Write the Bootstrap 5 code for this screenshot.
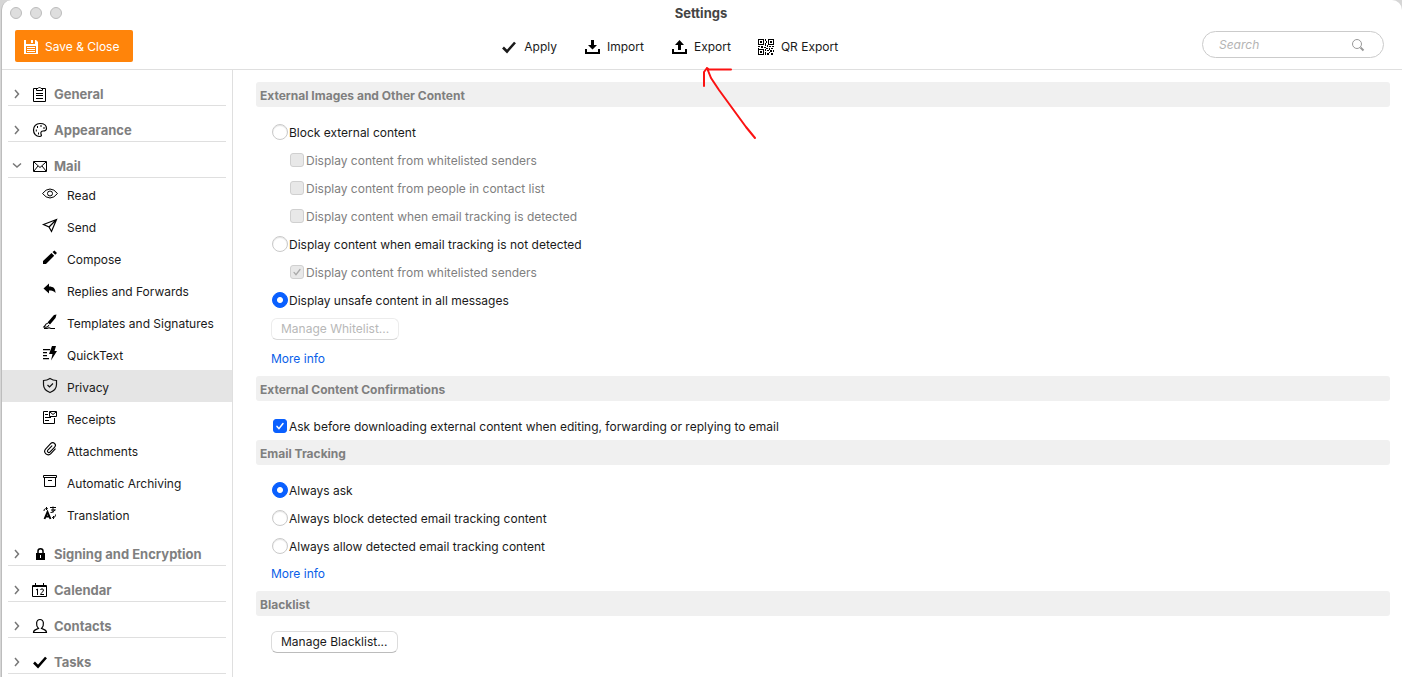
<!DOCTYPE html>
<html lang="en">
<head>
<meta charset="utf-8">
<meta name="viewport" content="width=device-width, initial-scale=1">
<title>Settings</title>
<link href="https://cdn.jsdelivr.net/npm/bootstrap@5.3.0/dist/css/bootstrap.min.css" rel="stylesheet">
<style>
  body { font: 12px/20px Inter, "Liberation Sans", sans-serif; color: #1a1a1a; background: #d6d6d6; overflow-x: hidden; }
  svg { flex: none; display: block; }
  button, input { font: inherit; }
  .window { margin-left: 1px; border-left: 1px solid #bdbdbd; border-radius: 10px 10px 0 0; background: #fff; }
  .titlebar { height: 26px; padding: 3px 15px 0 13px; }
  .titlebar h1 { font-size: 13px; line-height: 20px; color: #444; }
  .dots { left: 8px; top: 7px; gap: 8px; }
  .dot { width: 12px; height: 12px; border-radius: 50%; background: #dedede; border: 1px solid #bcbcbc; }
  .toolbar { padding: 4px 18px 7px 13px; border-bottom: 1px solid #dfdfdf; }
  .save { height: 32px; padding: 2px 14px 0 8px; gap: 6px; border-radius: 2px; background: #ff840a; color: #fff; border: 0; }
  .actions { gap: 27px; padding-left: 4px; }
  .tool { padding: 2px 0 0; border: 0; background: none; gap: 7px; color: #1a1a1a; }
  .tool svg { width: 16px; height: 16px; }
  .arrow { left: 26px; top: 28px; pointer-events: none; }
  .tool .arrow { width: 64px; height: 82px; }
  .search { width: 182px; height: 27px; margin-bottom: 3px; padding: 0 18px 0 16px; border: 1px solid #cbcbcb; border-radius: 14px; }
  .search input { width: 100%; min-width: 0; padding: 0; border: 0; outline: 0; background: none; font-style: italic; }
  .search input::placeholder { color: #b4b4b4; }
  .sidebar { width: 231px; border-right: 1px solid #dfdfdf; }
  .group { margin: 0 6px; width: 218px; height: 36px; padding: 12px 0 0 4px; border: 0; border-bottom: 1px solid #dfdfdf; background: none; color: #7f7f7f; font-size: 13px; font-weight: 700; line-height: 22px; text-align: left; }
  .group .chev { margin-right: 10px; color: #777; }
  .group .ico { margin-right: 6px; color: #000; }
  .sub { height: 32px; padding: 3px 0 0 39px; gap: 8px; color: #1a1a1a; text-decoration: none; }
  .sub svg { margin-bottom: 3px; }
  .sub.active { background: #e5e5e5; }
  .pane { padding: 12px 12px 20px 23px; }
  .bar { height: 25px; margin: 0 0 11px; padding: 0 4px; border-radius: 3px; background: #f0f0f0; color: #7f7f7f; font-size: 12px; font-weight: 700; line-height: 27px; }
  .rows { display: flow-root; padding-left: 16px; }
  .opt { height: 28px; gap: 1px; }
  .opt.inner { padding-left: 18px; gap: 2px; }
  .opt .form-check-input { width: 16px; height: 16px; margin: 0; border: 1px solid #c9c9c9; flex: none; opacity: 1; box-shadow: inset 0 1px 1px #e4e4e4; }
  .opt .form-check-input[type=checkbox] { width: 14px; height: 14px; margin: 0 1px; border-radius: 3px; }
  .opt.inner .form-check-input[type=checkbox] { margin: 0; }
  .opt .form-check-input:checked { background-color: #0a60ff; border-color: #0a60ff; box-shadow: none; }
  .opt .form-check-input[type=radio]:checked { background-image: radial-gradient(circle, #fff 2.5px, transparent 3.5px); }
  .opt .form-check-input[type=checkbox]:checked { background-image: url("data:image/svg+xml,%3csvg xmlns='http://www.w3.org/2000/svg' viewBox='0 0 14 14'%3e%3cpath d='M3.5 7.5l2.3 2.6 4.7-6' fill='none' stroke='white' stroke-width='1.8' stroke-linecap='round'/%3e%3c/svg%3e"); }
  .opt .form-check-input:disabled { background-color: #e8e8e8; border-color: #d0d0d0; opacity: 1; box-shadow: none; }
  .opt .form-check-input[type=checkbox]:disabled:checked { background-image: url("data:image/svg+xml,%3csvg xmlns='http://www.w3.org/2000/svg' viewBox='0 0 14 14'%3e%3cpath d='M3.5 7.5l2.3 2.6 4.7-6' fill='none' stroke='%23a9a9a9' stroke-width='1.5' stroke-linecap='round'/%3e%3c/svg%3e"); }
  .opt .form-check-input:disabled ~ label { color: #808080; opacity: 1; }
  .opt label { padding-top: 1px; }
  .push { display: block; height: 22px; margin: 4px 0 5px -1px; padding: 0 9px; line-height: 20px; border: 1px solid #dcdcdc; border-bottom-color: #bcbcbc; border-radius: 6px; background: #fff; color: #1a1a1a; }
  .push:disabled { color: #b8b8b8; border-color: #ececec; border-bottom-color: #d8d8d8; }
  .more { display: block; width: max-content; margin: 0 0 3px -1px; line-height: 28px; color: #0a60e8; text-decoration: none; }
</style>
</head>
<body>
<svg width="0" height="0" class="position-absolute" aria-hidden="true">
  <symbol id="chev" viewBox="0 0 10 10"><path d="M3 1l3.500 4-3.500 4" fill="none" stroke="currentColor" stroke-width="1.500"/></symbol>
  <symbol id="tick" viewBox="0 0 16 16"><path d="M2 8.500l4 4L14 3.500" fill="none" stroke="currentColor" stroke-width="2.600"/></symbol>
</svg>
<div class="window min-vh-100 d-flex flex-column">
  <header>
    <div class="titlebar position-relative text-center">
      <div class="dots position-absolute d-flex"><span class="dot"></span><span class="dot"></span><span class="dot"></span></div>
      <h1 class="m-0 fw-bold">Settings</h1>
    </div>
    <div class="toolbar d-flex align-items-center justify-content-between">
      <button type="button" class="save d-flex align-items-center">
        <svg width="16" height="16" viewBox="0 0 16 16" fill="none" stroke="#fff"><path d="M1 1h2v4h9V1h1l2 2v12H1z" fill="#fff" stroke="none"/><path d="M4 1v3h7V1z" fill="#ff840a" stroke="none"/><path d="M8 1h2v3H8z" fill="#fff" stroke="none"/><path d="M3 7h10v7H3z" fill="#ff840a" stroke="none"/><path d="M4 8.500h8M4 10.500h8M4 12.500h8"/></svg>
        Save &amp; Close
      </button>
      <div class="actions d-flex align-items-center">
        <button type="button" class="tool d-flex align-items-center"><svg><use href="#tick"/></svg>Apply</button>
        <button type="button" class="tool d-flex align-items-center"><svg viewBox="0 0 16 16"><path d="M7 1h3v5h3l-4.500 4.500L4 6h3z"/><path d="M2 10v4h13v-4" fill="none" stroke="#000" stroke-width="2"/></svg>Import</button>
        <button type="button" class="tool d-flex align-items-center position-relative"><svg viewBox="0 0 16 16"><path d="M7 11h3V6h3L8.500 1 4 6h3z"/><path d="M2 10v4h13v-4" fill="none" stroke="#000" stroke-width="2"/></svg>Export
          <svg class="arrow position-absolute" viewBox="0 0 64 82" fill="none" stroke="#fb1212" stroke-width="2" stroke-linecap="round" stroke-linejoin="round"><path d="M58 75L49 64 22 27 14 15 10 5M7 23V9L10 5 12 6.500H34"/></svg>
        </button>
        <button type="button" class="tool d-flex align-items-center"><svg viewBox="0 0 16 16" fill="none" stroke="#000" shape-rendering="crispEdges"><path d="M.5.5h5v5h-5zM10.500.5h5v5h-5zM.5 10.500h5v5h-5z"/><path d="M2 2h2v2H2zM12 2h2v2h-2zM2 12h2v2H2zM7 0h1v2H7zM8 2h1v2H8zM7 4h1v3H7zM0 7h2v1H0zM3 7h2v2H3zM6 8h2v1H6zM9 6h1v2H9zM11 7h2v1h-2zM14 7h2v1h-2zM0 9h1v1H0zM8 9h2v1H8zM7 10h1v2H7zM11 9h1v2h-1zM13 9h2v1h-2zM9 11h2v1H9zM12 11h2v2h-2zM15 11h1v2h-1zM7 13h1v3H7zM9 14h2v2H9zM11 13h1v1h-1zM13 14h2v2h-2z" fill="#000" stroke="none"/></svg>QR Export</button>
      </div>
      <label class="search d-flex align-items-center">
        <input type="text" placeholder="Search" aria-label="Search">
        <svg width="14" height="14" viewBox="0 0 14 14" fill="none" stroke="#999"><circle cx="6" cy="6" r="4.500"/><path d="M9.500 9.500l3 3" stroke-width="2"/></svg>
      </label>
    </div>
  </header>
  <div class="d-flex flex-grow-1">
    <nav class="sidebar flex-shrink-0">
      <button type="button" class="group d-flex align-items-center"><svg class="chev" width="10" height="10"><use href="#chev"/></svg><svg class="ico" width="16" height="16" viewBox="0 0 16 16" fill="none" stroke="#000"><path d="M5 2.500H1.500v13h12v-13H10M4.500 4.500v-2h1.500L7.500 1 9 2.500h1.500v2zM4 7.500h7M4 9.500h7M4 12.500h7"/></svg>General</button>
      <button type="button" class="group d-flex align-items-center"><svg class="chev" width="10" height="10"><use href="#chev"/></svg><svg class="ico" width="16" height="16" viewBox="0 0 16 16" fill="none" stroke="#000" stroke-width="1.200"><path d="M8 1.500C4 1.500 1.500 4.500 1.500 8S4 14.500 7.500 14.500c2.500 0 2-1.500 1.500-2.500-.5-2 .5-3 2-3 2 0 3.500-.5 3.500-2.500C14.500 3.500 12 1.500 8 1.500z"/><path d="M5 5h1M8.500 4h1M11.500 6h1M3.800 8.500h1M6 11.500h1" stroke-width="2"/></svg>Appearance</button>
      <button type="button" class="group d-flex align-items-center" aria-expanded="true"><svg class="chev" width="10" height="10" viewBox="0 0 10 10"><path d="M1 2.500L5 6l4-3.500" fill="none" stroke="currentColor" stroke-width="1.500"/></svg><svg class="ico" width="16" height="16" viewBox="0 0 16 16" fill="none" stroke="#000"><path d="M1.500 3.500h13v10h-13z"/><path d="M2 4l6 5.500L14 4M2 13l4-5M14 13l-4-5"/></svg>Mail</button>
      <a href="#" class="sub d-flex align-items-center"><svg width="18" height="18" viewBox="0 0 18 18" fill="none" stroke="#000"><path d="M1.500 8.500Q5 4 9 4t7.500 4.500Q13 13 9 13T1.500 8.500z"/><circle cx="9" cy="8.500" r="2.500"/></svg>Read</a>
      <a href="#" class="sub d-flex align-items-center"><svg width="18" height="18" viewBox="0 0 18 18" fill="none" stroke="#000" stroke-width="1.200"><path d="M2.500 7.500L15.500 2.500 10.500 14.500 8 10zM8 10l7.500-7.500"/></svg>Send</a>
      <a href="#" class="sub d-flex align-items-center"><svg width="18" height="18" viewBox="0 0 18 18"><path d="M2 15v-3l8.500-8 2.700 2.700L5 15zM11.500 3L13.500 1.500 16 4l-1.800 1.800z"/></svg>Compose</a>
      <a href="#" class="sub d-flex align-items-center"><svg width="18" height="18" viewBox="0 0 18 18"><path d="M2.500 7.500L8 2.500v3c4.500 0 6.500 2 6.500 6.500C13 9.800 11 9.500 8 9.500v3z"/></svg>Replies and Forwards</a>
      <a href="#" class="sub d-flex align-items-center"><svg width="18" height="18" viewBox="0 0 18 18"><path d="M15.500 1.500L13 2 6.500 9.500l2.500 2L14.500 5z"/><path d="M6.800 10.500c-2-.5-2.300 1.500-3 2.500l-1 1c2 .5 4.500.2 5-2M3 15.500h3l2-.7 2 .7h4" fill="none" stroke="#000" stroke-width="1.100"/></svg>Templates and Signatures</a>
      <a href="#" class="sub d-flex align-items-center"><svg width="18" height="18" viewBox="0 0 18 18"><path d="M2 4h7v1.300H2zM2 7h4v1.300H2zM2 10h4v1.300H2zM2 13h6v1.300H2z"/><path d="M11 1h4l-1.500 5H16l-6 9.500L11.500 9H8z"/></svg>QuickText</a>
      <a href="#" class="sub active d-flex align-items-center" aria-current="page"><svg width="18" height="18" viewBox="0 0 18 18" fill="none" stroke="#111" stroke-width="1.200"><path d="M9 1.500Q6 3.500 2.500 3.500v4C2.500 11.500 5 14 9 15.500c4-1.500 6.500-4 6.500-8v-4Q12 3.500 9 1.500zM6.500 8l2 2 3.500-3.500"/></svg>Privacy</a>
      <a href="#" class="sub d-flex align-items-center"><svg width="18" height="18" viewBox="0 0 18 18" fill="none" stroke="#000"><path d="M7 2.500H2.500v12h11V9M8.500 2.500h7v5h-7zM9 3l3 2.500L15 3M4 5.500h3M4 8.500h6M4 11.500h4"/></svg>Receipts</a>
      <a href="#" class="sub d-flex align-items-center"><svg width="18" height="18" viewBox="0 0 18 18" fill="none" stroke="#000" stroke-width="1.100" stroke-linecap="round"><g transform="rotate(43 9 8.500)"><path d="M12.500 5v6.500a3.500 3.500 0 0 1-7 0V4a2.600 2.600 0 0 1 5.200 0v7a1.400 1.400 0 0 1-2.800 0V5" transform="translate(0 -.5)"/></g></svg>Attachments</a>
      <a href="#" class="sub d-flex align-items-center"><svg width="18" height="18" viewBox="0 0 18 18" fill="none" stroke="#000"><path d="M2.500 2.500h13v2h-13zM3.500 5v8.500h11V5M7 7.500h4"/></svg>Automatic Archiving</a>
      <a href="#" class="sub d-flex align-items-center"><svg width="18" height="18" viewBox="0 0 18 18" fill="none" stroke="#000"><path d="M3.500 14L6.500 7l3 7M4.500 11.500h4" stroke-width="1.900"/><path d="M9 2.500h6M10 5h4.500M12 1.500v6M9.500 7.500c2 0 4-1 4.500-3M3 6c0-2 1-2.500 3-2.500M5 2l1.500 1.500L5 5M14.500 9.500c0 2-.5 3-3 3M13 11l-1.500 1.500L13 14"/></svg>Translation</a>
      <button type="button" class="group d-flex align-items-center"><svg class="chev" width="10" height="10"><use href="#chev"/></svg><svg class="ico" width="16" height="16" viewBox="0 0 16 16"><path d="M4 7h9v7H4z"/><path d="M6 8V5c0-3 5-3 5 0v3" fill="none" stroke="#000" stroke-width="1.500"/><path d="M8 9h1v3H8z" fill="#fff"/></svg>Signing and Encryption</button>
      <button type="button" class="group d-flex align-items-center"><svg class="chev" width="10" height="10"><use href="#chev"/></svg><svg class="ico" width="16" height="16" viewBox="0 0 16 16" fill="none" stroke="#000"><path d="M.5 3.500h14v11H.5zM0 4.500h15M3.500 1v3M11.500 1v3"/><path d="M4 8l1.500-1v6M8.500 8c0-1.500 3-1.500 3 0S9 11 8.500 12.500H12"/></svg>Calendar</button>
      <button type="button" class="group d-flex align-items-center"><svg class="chev" width="10" height="10"><use href="#chev"/></svg><svg class="ico" width="16" height="16" viewBox="0 0 16 16" fill="none" stroke="#000" stroke-width="1.200"><path d="M1.500 14.500c0-3 3-3 5-4-3-3-2.500-9 1.500-9s4.500 6 1.500 9c2 1 5 1 5 4z"/></svg>Contacts</button>
      <button type="button" class="group d-flex align-items-center"><svg class="chev" width="10" height="10"><use href="#chev"/></svg><svg class="ico" width="16" height="16"><use href="#tick"/></svg>Tasks</button>
    </nav>
    <main class="pane flex-grow-1">
      <h2 class="bar">External Images and Other Content</h2>
      <div class="rows">
        <div class="opt d-flex align-items-center"><input class="form-check-input" type="radio" name="ext" id="e1"><label for="e1">Block external content</label></div>
        <div class="opt inner d-flex align-items-center"><input class="form-check-input" type="checkbox" id="c1" disabled><label for="c1">Display content from whitelisted senders</label></div>
        <div class="opt inner d-flex align-items-center"><input class="form-check-input" type="checkbox" id="c2" disabled><label for="c2">Display content from people in contact list</label></div>
        <div class="opt inner d-flex align-items-center"><input class="form-check-input" type="checkbox" id="c3" disabled><label for="c3">Display content when email tracking is detected</label></div>
        <div class="opt d-flex align-items-center"><input class="form-check-input" type="radio" name="ext" id="e2"><label for="e2">Display content when email tracking is not detected</label></div>
        <div class="opt inner d-flex align-items-center"><input class="form-check-input" type="checkbox" id="c4" checked disabled><label for="c4">Display content from whitelisted senders</label></div>
        <div class="opt d-flex align-items-center"><input class="form-check-input" type="radio" name="ext" id="e3" checked><label for="e3">Display unsafe content in all messages</label></div>
        <button type="button" class="push" disabled>Manage Whitelist...</button>
        <a href="#" class="more">More info</a>
      </div>
      <h2 class="bar">External Content Confirmations</h2>
      <div class="rows">
        <div class="opt d-flex align-items-center"><input class="form-check-input" type="checkbox" id="ask" checked><label for="ask">Ask before downloading external content when editing, forwarding or replying to email</label></div>
      </div>
      <h2 class="bar">Email Tracking</h2>
      <div class="rows">
        <div class="opt d-flex align-items-center"><input class="form-check-input" type="radio" name="track" id="t1" checked><label for="t1">Always ask</label></div>
        <div class="opt d-flex align-items-center"><input class="form-check-input" type="radio" name="track" id="t2"><label for="t2">Always block detected email tracking content</label></div>
        <div class="opt d-flex align-items-center"><input class="form-check-input" type="radio" name="track" id="t3"><label for="t3">Always allow detected email tracking content</label></div>
        <a href="#" class="more">More info</a>
      </div>
      <h2 class="bar">Blacklist</h2>
      <div class="rows">
        <button type="button" class="push">Manage Blacklist...</button>
      </div>
    </main>
  </div>
</div>
<script src="https://cdn.jsdelivr.net/npm/bootstrap@5.3.0/dist/js/bootstrap.bundle.min.js"></script>
</body>
</html>
